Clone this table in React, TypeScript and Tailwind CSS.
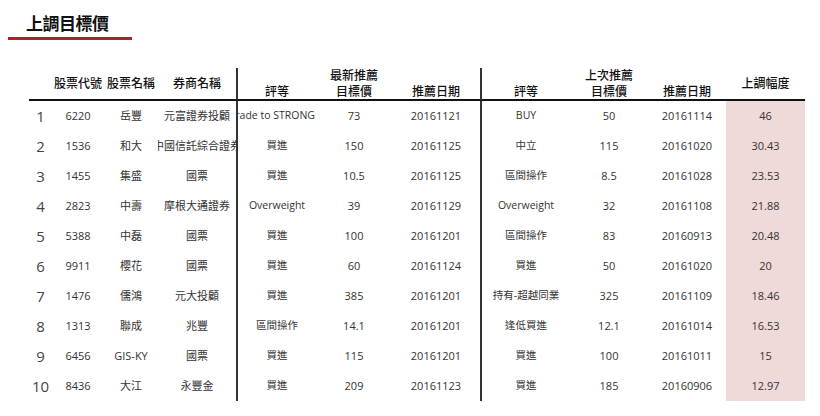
import React from "react";

const rows = [
  ["1", "6220", "岳豐", "元富證券投顧", "Upgrade to STRONG", "73", "20161121", "BUY", "50", "20161114", "46"],
  ["2", "1536", "和大", "中國信託綜合證券", "買進", "150", "20161125", "中立", "115", "20161020", "30.43"],
  ["3", "1455", "集盛", "國票", "買進", "10.5", "20161125", "區間操作", "8.5", "20161028", "23.53"],
  ["4", "2823", "中壽", "摩根大通證券", "Overweight", "39", "20161129", "Overweight", "32", "20161108", "21.88"],
  ["5", "5388", "中磊", "國票", "買進", "100", "20161201", "區間操作", "83", "20160913", "20.48"],
  ["6", "9911", "櫻花", "國票", "買進", "60", "20161124", "買進", "50", "20161020", "20"],
  ["7", "1476", "儒鴻", "元大投顧", "買進", "385", "20161201", "持有-超越同業", "325", "20161109", "18.46"],
  ["8", "1313", "聯成", "兆豐", "區間操作", "14.1", "20161201", "逢低買進", "12.1", "20161014", "16.53"],
  ["9", "6456", "GIS-KY", "國票", "買進", "115", "20161201", "買進", "100", "20161011", "15"],
  ["10", "8436", "大江", "永豐金", "買進", "209", "20161123", "買進", "185", "20160906", "12.97"],
];

const grid =
  "grid grid-cols-[23px_52px_54px_78px_80px_76px_88px_90px_78px_78px_79px]";

const font = {
  fontFamily: '"Open Sans", "Noto Sans CJK TC", sans-serif',
};

export default function App() {
  return (
    <div className="w-[820px] h-[416px] bg-white pt-[13px]" style={font}>
      <div className="pl-[26px] text-[17px] leading-[22px] font-bold text-[#111] tracking-[-0.5px]">
        上調目標價
      </div>
      <div className="ml-2 mt-[2px] h-[3px] w-[124px] bg-[#b0202a]" />
      <div className="ml-[29px] mt-[28px] w-[776px]">
        <div className={`${grid} h-[33px] border-b-2 border-[#111] text-[12px] leading-[16px] font-medium text-[#111]`}>
          <div />
          <div className="flex items-center justify-center whitespace-nowrap">股票代號</div>
          <div className="flex items-center justify-center whitespace-nowrap">股票名稱</div>
          <div className="flex items-center justify-center whitespace-nowrap">券商名稱</div>
          <div className="flex flex-col items-center justify-end border-l-2 border-[#333]">評等</div>
          <div className="flex flex-col items-center justify-end">
            <span>最新推薦</span>
            <span>目標價</span>
          </div>
          <div className="flex flex-col items-center justify-end">推薦日期</div>
          <div className="flex flex-col items-center justify-end border-l-2 border-[#333]">評等</div>
          <div className="flex flex-col items-center justify-end">
            <span>上次推薦</span>
            <span>目標價</span>
          </div>
          <div className="flex flex-col items-center justify-end">推薦日期</div>
          <div className="flex items-center justify-center">上調幅度</div>
        </div>
        {rows.map((r) => (
          <div key={r[0]} className={`${grid} h-[30px] text-[11px] text-[#333]`}>
            <div className="flex items-center justify-center text-[15px] text-[#444]">{r[0]}</div>
            <div className="flex items-center justify-center">{r[1]}</div>
            <div className="flex items-center justify-center whitespace-nowrap">{r[2]}</div>
            <div className="flex items-center justify-center overflow-hidden whitespace-nowrap">{r[3]}</div>
            <div
              className={`flex items-center overflow-hidden whitespace-nowrap border-l-2 border-[#333] text-[10.5px] ${
                r[0] === "1" ? "justify-end pr-[1px]" : "justify-center"
              }`}
            >
              {r[4]}
            </div>
            <div className="flex items-center justify-center">{r[5]}</div>
            <div className="flex items-center justify-center">{r[6]}</div>
            <div className="flex items-center justify-center whitespace-nowrap border-l-2 border-[#333] text-[10.5px]">
              {r[7]}
            </div>
            <div className="flex items-center justify-center">{r[8]}</div>
            <div className="flex items-center justify-center">{r[9]}</div>
            <div className="flex items-center justify-center bg-[#efd9d9]">{r[10]}</div>
          </div>
        ))}
      </div>
    </div>
  );
}
